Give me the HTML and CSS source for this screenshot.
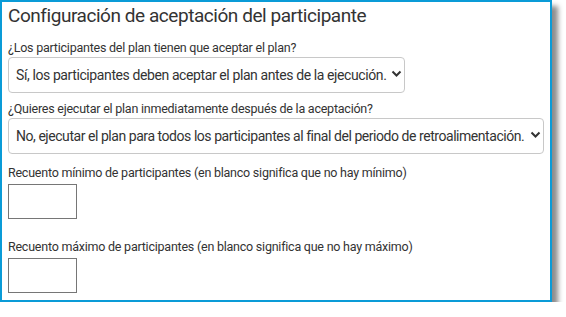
FILE: index.html
```html
<!DOCTYPE html>
<html lang="es">
<head>
    <meta charset="UTF-8">
    <meta name="viewport" content="width=device-width, initial-scale=1.0">
    <title>Configuración de aceptación del participante</title>
    <link rel="stylesheet" href="styles.css">
</head>
<body>

    <div class="panel">
        <h2>Configuración de aceptación del participante</h2>

        <div class="field">
            <label for="acceptPlan">¿Los participantes del plan tienen que aceptar el plan?</label>
            <div class="select-wrap short">
                <select id="acceptPlan">
                    <option>Sí, los participantes deben aceptar el plan antes de la ejecución.</option>
                    <option>No, los participantes no tienen que aceptar el plan.</option>
                </select>
                <svg class="chevron" width="11" height="8" viewBox="0 0 11 8"><path d="M1.5 1.5 L5.5 5.5 L9.5 1.5" fill="none" stroke="#333" stroke-width="2"/></svg>
            </div>
        </div>

        <div class="field">
            <label for="runPlan">¿Quieres ejecutar el plan inmediatamente después de la aceptación?</label>
            <div class="select-wrap long">
                <select id="runPlan">
                    <option>No, ejecutar el plan para todos los participantes al final del periodo de retroalimentación.</option>
                    <option>Sí, ejecutar el plan inmediatamente después de la aceptación.</option>
                </select>
                <svg class="chevron" width="11" height="8" viewBox="0 0 11 8"><path d="M1.5 1.5 L5.5 5.5 L9.5 1.5" fill="none" stroke="#333" stroke-width="2"/></svg>
            </div>
        </div>

        <div class="field count-field">
            <label for="minCount">Recuento mínimo de participantes (en blanco significa que no hay mínimo)</label>
            <input type="text" id="minCount" class="count">
        </div>

        <div class="field count-field">
            <label for="maxCount">Recuento máximo de participantes (en blanco significa que no hay máximo)</label>
            <input type="text" id="maxCount" class="count">
        </div>
    </div>

</body>
</html>
```

FILE: styles.css
```css
body {
    font-family: Roboto, "Liberation Sans", Arial, sans-serif;
    background-color: #fff;
    margin: 0;
    padding: 0;
    color: #333;
}
.panel {
    width: 552px;
    height: 302px;
    box-sizing: border-box;
    border: 2px solid #0a9bd7;
    padding: 2px 6px 0 6px;
    box-shadow: 6px 6px 5px rgba(0, 0, 0, 0.45);
    background-color: white;
}
h2 {
    font-size: 19px;
    letter-spacing: -0.45px;
    font-weight: 400;
    line-height: 24px;
    margin: 0 0 12px 0;
    color: #333;
}
.field {
    margin-bottom: 8px;
}
.field + .field {
    margin-bottom: 11px;
}
.field.count-field {
    margin-bottom: 20px;
}
.field label {
    display: block;
    font-size: 12.5px;
    letter-spacing: -0.23px;
    line-height: 16px;
    margin-bottom: 1px;
}
.select-wrap {
    position: relative;
    height: 36px;
}
.select-wrap.short {
    width: 397px;
}
.select-wrap.long {
    width: 536px;
}
.select-wrap select {
    appearance: none;
    width: 100%;
    height: 100%;
    box-sizing: border-box;
    border: 1px solid #c8c8c8;
    border-radius: 4px;
    background: white;
    padding: 0 14px 0 7px;
    font-family: inherit;
    font-size: 14px;
    letter-spacing: -0.4px;
    color: #333;
}
.select-wrap.long select {
    letter-spacing: -0.45px;
}
.chevron {
    position: absolute;
    right: 3px;
    top: 13px;
    pointer-events: none;
}
.count {
    display: block;
    width: 69px;
    height: 35px;
    box-sizing: border-box;
    border: 1px solid #767676;
    border-radius: 0;
    margin-top: 3px;
}
```
